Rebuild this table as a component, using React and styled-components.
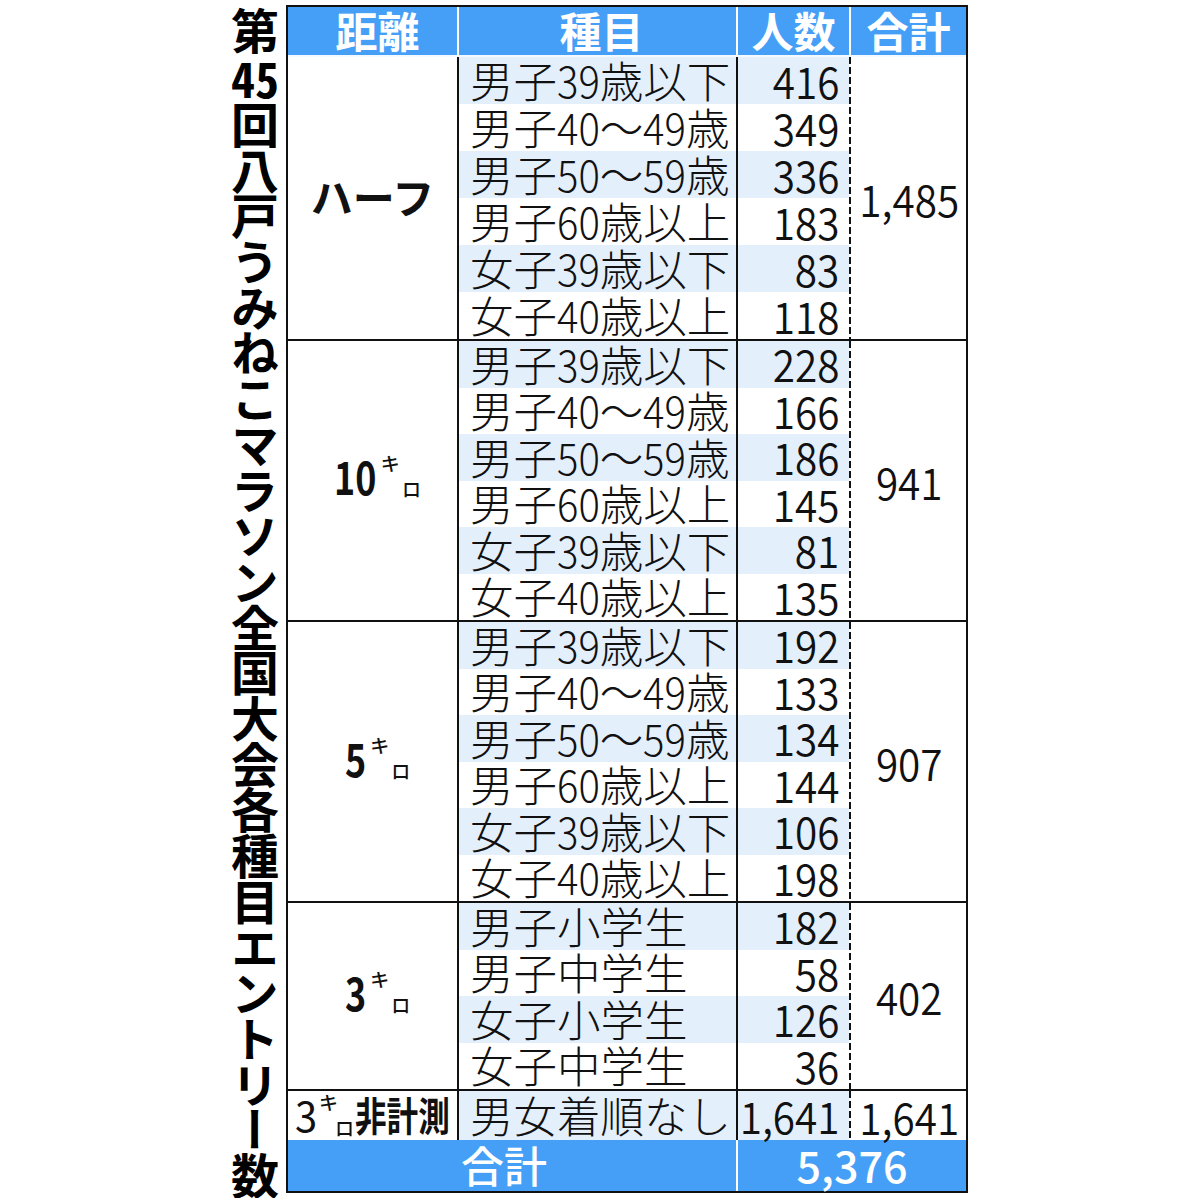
import React from "react";
import styled, { createGlobalStyle } from "styled-components";

const BLUE = "#459ff6";
const SHADE = "#e4effc";
const INK = "#111";
const JP = `"Noto Sans CJK JP", "Noto Sans", sans-serif`;

const Global = createGlobalStyle`
  *, *::before, *::after { box-sizing: border-box; }
  html, body { margin: 0; padding: 0; background: #fff; }
  body { font-family: ${JP}; color: ${INK}; overflow: hidden; }
`;

const Page = styled.div`
  display: flex;
  align-items: flex-start;
  padding: 5px 0 0 231px;
  gap: 7px;
`;

const Title = styled.h1`
  margin: 0;
  writing-mode: vertical-rl;
  font: 700 48px/48px ${JP};
  letter-spacing: -2.3px;
  color: #000;
  width: 48px;
  padding-top: 2px;
`;

const Combine = styled.span`
  text-combine-upright: all;
`;

const Table = styled.div`
  display: flex;
  flex-direction: column;
  border: 2px solid ${INK};
  width: 682px;
`;

const HeaderRow = styled.div`
  display: flex;
  height: 50px;
  background: ${BLUE};
  border-bottom: 2px solid #f4f9ff;
`;

const HeaderCell = styled.div`
  width: ${(p) => p.$w}px;
  display: flex;
  align-items: center;
  justify-content: center;
  color: #fff;
  font: 700 42px/1 ${JP};
  border-right: ${(p) => (p.$last ? "none" : "2px solid #fff")};
  padding: 0 0 2px ${(p) => p.$pl || 0}px;
`;

const Section = styled.div`
  display: flex;
  border-top: ${(p) => (p.$first ? "none" : `2px solid ${INK}`)};
`;

const DistCell = styled.div`
  width: 171px;
  border-right: 2px solid ${INK};
  display: flex;
  align-items: center;
  justify-content: center;
  padding: 0 0 ${(p) => p.$lift || 0}px ${(p) => p.$pl || 0}px;
  font: 700 42px/1 ${JP};
  color: ${INK};
`;

const Entries = styled.div`
  display: flex;
  flex-direction: column;
  width: 390px;
`;

const EntryRow = styled.div`
  display: flex;
  height: ${(p) => p.$h}px;
  background: ${(p) => (p.$shaded ? SHADE : "#fff")};
`;

const EventCell = styled.div`
  width: 279px;
  border-right: 2px solid ${INK};
  display: flex;
  align-items: center;
  padding: 0 0 2px 11px;
  font: 300 43.5px/1 ${JP};
  white-space: nowrap;
`;

const Digits = styled.span`
  display: inline-block;
  transform: scaleX(0.92);
  transform-origin: left center;
  margin-right: ${(p) => (-0.08 * 0.555 * p.$n).toFixed(3)}em;
`;

const CountCell = styled.div`
  width: 111px;
  display: flex;
  align-items: center;
  justify-content: flex-end;
  padding: 0 10px 2px 0;
  font: 350 44px/1 ${JP};
`;

const Squeeze = styled.span`
  display: inline-block;
  white-space: nowrap;
  transform: scaleX(${(p) => p.$k || 0.9});
  transform-origin: ${(p) => p.$origin || "center"} center;
`;

const TotalCell = styled.div`
  width: 117px;
  display: flex;
  align-items: center;
  justify-content: center;
  padding-left: 4px;
  font: 350 44px/1 ${JP};
  background-image: repeating-linear-gradient(
    to bottom,
    ${INK} 0 7px,
    transparent 7px 10px
  );
  background-size: 2px 100%;
  background-repeat: no-repeat;
  background-position: left top;
`;

const Label = styled.span`
  display: inline-flex;
  align-items: stretch;
  height: 38px;
`;

const LabelNum = styled.span`
  display: inline-block;
  font: ${(p) => p.$weight || 700} ${(p) => p.$size || 46}px/38px ${JP};
  transform: scaleX(${(p) => p.$k || 0.78});
  transform-origin: left center;
  margin-right: ${(p) => (-(1 - (p.$k || 0.78)) * 0.57 * p.$n).toFixed(3)}em;
`;

const Ki = styled.span`
  align-self: flex-start;
  font: 500 19px/1 ${JP};
  margin: -3px 0 0 ${(p) => p.$ml ?? 4}px;
`;

const Ro = styled.span`
  align-self: flex-end;
  font: 500 19px/1 ${JP};
  margin: 0 0 -4px ${(p) => p.$ml ?? 2}px;
`;

const Condensed = styled.span`
  display: inline-block;
  font: 700 40px/38px ${JP};
  transform: scaleX(0.79);
  transform-origin: left center;
  margin-right: -25px;
  margin-left: 1px;
`;

const SumRow = styled.div`
  display: flex;
  height: 51px;
  background: ${BLUE};
  color: #fff;
`;

const SumCell = styled.div`
  width: ${(p) => p.$w}px;
  display: flex;
  align-items: center;
  justify-content: center;
  font: 500 43px/1 ${JP};
  border-right: ${(p) => (p.$last ? "none" : "2px solid #fff")};
  padding: 0 ${(p) => p.$pr || 0}px 3px 0;
`;

const Km = ({ n }) => (
  <Label>
    <LabelNum $n={n.length}>{n}</LabelNum>
    <Ki>キ</Ki>
    <Ro>ロ</Ro>
  </Label>
);

const EventText = ({ text }) =>
  text.split(/(\d+)/).map((part, i) =>
    /^\d+$/.test(part) ? (
      <Digits key={i} $n={part.length}>
        {part}
      </Digits>
    ) : (
      <React.Fragment key={i}>{part}</React.Fragment>
    )
  );

const sections = [
  {
    key: "half",
    dist: <span>ハーフ</span>,
    lift: 4,
    h: 47,
    total: "1,485",
    items: [
      ["男子39歳以下", "416"],
      ["男子40～49歳", "349"],
      ["男子50～59歳", "336"],
      ["男子60歳以上", "183"],
      ["女子39歳以下", "83"],
      ["女子40歳以上", "118"],
    ],
  },
  {
    key: "10k",
    dist: <Km n="10" />,
    lift: 12,
    pl: 10,
    h: 46.5,
    total: "941",
    items: [
      ["男子39歳以下", "228"],
      ["男子40～49歳", "166"],
      ["男子50～59歳", "186"],
      ["男子60歳以上", "145"],
      ["女子39歳以下", "81"],
      ["女子40歳以上", "135"],
    ],
  },
  {
    key: "5k",
    dist: <Km n="5" />,
    lift: 10,
    pl: 10,
    h: 46.5,
    total: "907",
    items: [
      ["男子39歳以下", "192"],
      ["男子40～49歳", "133"],
      ["男子50～59歳", "134"],
      ["男子60歳以上", "144"],
      ["女子39歳以下", "106"],
      ["女子40歳以上", "198"],
    ],
  },
  {
    key: "3k",
    dist: <Km n="3" />,
    lift: 10,
    pl: 10,
    h: 46.5,
    total: "402",
    items: [
      ["男子小学生", "182"],
      ["男子中学生", "58"],
      ["女子小学生", "126"],
      ["女子中学生", "36"],
    ],
  },
];

export default function App() {
  return (
    <>
      <Global />
      <Page>
        <Title>
          第<Combine>45</Combine>回八戸うみねこマラソン全国大会各種目エントリー数
        </Title>
        <Table>
          <HeaderRow>
            <HeaderCell $w={171} $pl={10}>距離</HeaderCell>
            <HeaderCell $w={279} $pl={8}>種目</HeaderCell>
            <HeaderCell $w={113}>人数</HeaderCell>
            <HeaderCell $w={115} $last>合計</HeaderCell>
          </HeaderRow>
          {sections.map((s, si) => (
            <Section key={s.key} $first={si === 0}>
              <DistCell $lift={s.lift} $pl={s.pl}>{s.dist}</DistCell>
              <Entries>
                {s.items.map(([ev, n], i) => (
                  <EntryRow key={ev + i} $h={s.h} $shaded={i % 2 === 0}>
                    <EventCell>
                      <EventText text={ev} />
                    </EventCell>
                    <CountCell>
                      <Squeeze $k={0.92} $origin="right">{n}</Squeeze>
                    </CountCell>
                  </EntryRow>
                ))}
              </Entries>
              <TotalCell>
                <Squeeze $k={0.92}>{s.total}</Squeeze>
              </TotalCell>
            </Section>
          ))}
          <Section>
            <DistCell $lift={4}>
              <Label>
                <LabelNum $weight={400} $size={42} $k={0.95} $n={1}>3</LabelNum>
                <Ki $ml={2}>キ</Ki>
                <Ro $ml={-3}>ロ</Ro>
                <Condensed>非計測</Condensed>
              </Label>
            </DistCell>
            <Entries>
              <EntryRow $h={49} $shaded>
                <EventCell>男女着順なし</EventCell>
                <CountCell>
                  <Squeeze $k={0.92} $origin="right">1,641</Squeeze>
                </CountCell>
              </EntryRow>
            </Entries>
            <TotalCell>
              <Squeeze $k={0.92}>1,641</Squeeze>
            </TotalCell>
          </Section>
          <SumRow>
            <SumCell $w={450} $pr={16}>合計</SumCell>
            <SumCell $w={228} $last>5,376</SumCell>
          </SumRow>
        </Table>
      </Page>
    </>
  );
}
